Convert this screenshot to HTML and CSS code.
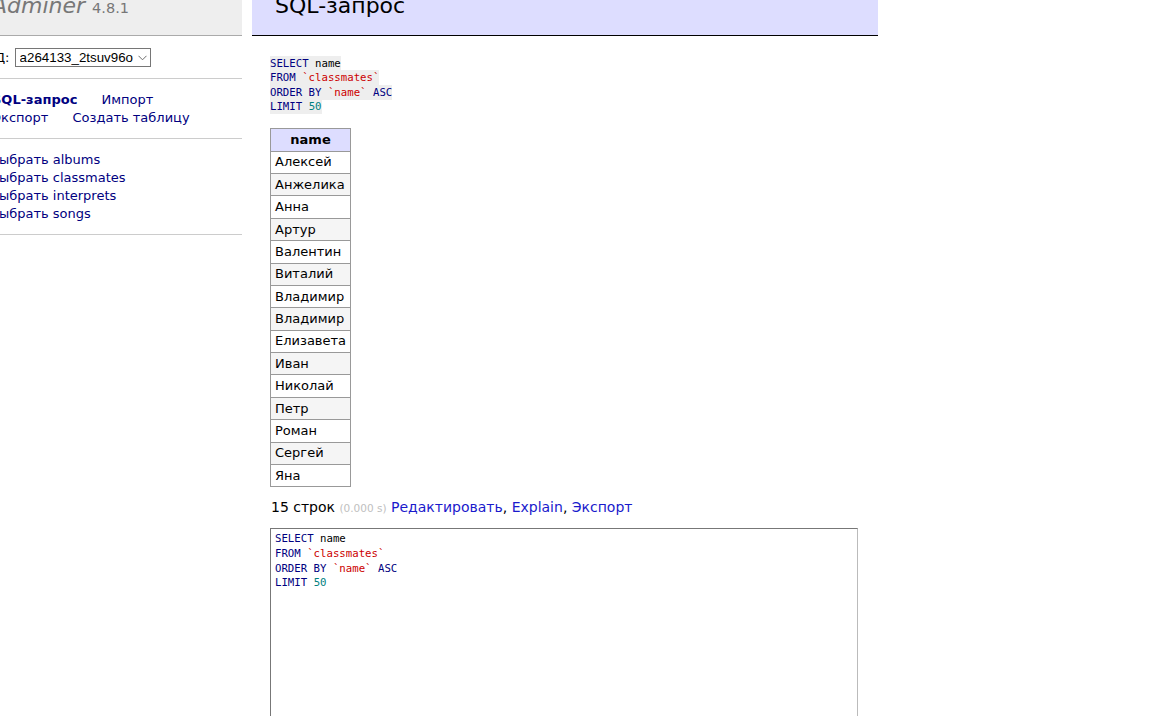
FILE: index.html
```html
<!DOCTYPE html>
<html lang="ru">
<head>
<meta charset="utf-8">
<title>SQL-запрос - Adminer</title>
<link rel="stylesheet" href="styles.css">
</head>
<body>
<div class="page">
  <aside class="menu">
    <h1 class="brand"><span class="brand-inner"><a class="logo" href="#">Adminer</a> <span class="version">4.8.1</span></span></h1>
    <div class="db-row">БД:&nbsp;<span class="select-wrap"><select class="db-select"><option>a264133_2tsuv96o</option></select><svg class="chevron" width="9" height="6" viewBox="0 0 9 6"><path d="M0.5 0.8 L4.5 4.8 L8.5 0.8" fill="none" stroke="#6d6d6d" stroke-width="1"/></svg></span></div>
    <p class="links"><a class="active" href="#">SQL-запрос</a> <a href="#">Импорт</a><br><a href="#">Экспорт</a> <a href="#">Создать таблицу</a></p>
    <ul class="tables">
      <li><a href="#">Выбрать albums</a></li>
      <li><a href="#">Выбрать classmates</a></li>
      <li><a href="#">Выбрать interprets</a></li>
      <li><a href="#">Выбрать songs</a></li>
    </ul>
  </aside>
  <main class="content">
    <h2 class="title"><span class="title-inner">SQL-запрос</span></h2>
    <p class="query"><code class="sql"><span class="kw">SELECT</span> name<br><span class="kw">FROM</span> <span class="bac">`classmates`</span><br><span class="kw">ORDER BY</span> <span class="bac">`name`</span> <span class="kw">ASC</span><br><span class="kw">LIMIT</span> <span class="num">50</span></code></p>
    <table class="result">
      <thead><tr><th>name</th></tr></thead>
      <tbody>
        <tr><td>Алексей</td></tr>
        <tr><td>Анжелика</td></tr>
        <tr><td>Анна</td></tr>
        <tr><td>Артур</td></tr>
        <tr><td>Валентин</td></tr>
        <tr><td>Виталий</td></tr>
        <tr><td>Владимир</td></tr>
        <tr><td>Владимир</td></tr>
        <tr><td>Елизавета</td></tr>
        <tr><td>Иван</td></tr>
        <tr><td>Николай</td></tr>
        <tr><td>Петр</td></tr>
        <tr><td>Роман</td></tr>
        <tr><td>Сергей</td></tr>
        <tr><td>Яна</td></tr>
      </tbody>
    </table>
    <p class="status">15 строк <span class="time">(0.000 s)</span> <a href="#">Редактировать</a>, <a href="#">Explain</a>, <a href="#">Экспорт</a></p>
    <div class="editor"><span class="kw">SELECT</span> name<br><span class="kw">FROM</span> <span class="bac">`classmates`</span><br><span class="kw">ORDER BY</span> <span class="bac">`name`</span> <span class="kw">ASC</span><br><span class="kw">LIMIT</span> <span class="num">50</span></div>
  </main>
</div>
</body>
</html>
```
FILE: styles.css
```css
html, body {
  margin: 0;
  padding: 0;
  overflow: hidden;
  background: #fff;
}
body {
  font-family: "DejaVu Sans", Verdana, sans-serif;
  font-size: 13px;
  color: #000;
}
a {
  text-decoration: none;
  color: #0000ee;
}
.page {
  display: flex;
  align-items: flex-start;
}

/* sidebar */
.menu {
  flex: 0 0 252px;
  width: 252px;
  margin-left: -10px;
}
.brand {
  margin: 0;
  height: 35px;
  overflow: hidden;
  background: #eee;
  border-bottom: 1px solid #aaa;
  font-weight: normal;
  font-size: 22px;
  line-height: 22px;
  color: #777;
  white-space: nowrap;
}
.brand-inner {
  display: block;
  margin-top: -5px;
  margin-left: 2px;
}
.logo {
  color: #777;
  font-style: italic;
}
.version {
  font-size: 14.5px;
  color: #777;
}
.db-row {
  display: flex;
  align-items: center;
  margin-left: -4px;
  padding: 12px 0 11px 0;
  border-bottom: 1px solid #ccc;
  line-height: 18px;
}
.select-wrap {
  position: relative;
  display: block;
  height: 19px;
  margin-left: 1px;
}
.db-select {
  display: block;
  -webkit-appearance: none;
  appearance: none;
  box-sizing: border-box;
  height: 19px;
  width: 136px;
  font-family: "Liberation Sans", Arial, sans-serif;
  font-size: 13.33px;
  line-height: 17px;
  color: #000;
  background: #fff;
  border: 1px solid #767676;
  border-radius: 0;
  padding: 0 0 0 4px;
  margin: 0;
}
.chevron {
  position: absolute;
  right: 4px;
  top: 7px;
}
.links {
  margin: 0;
  padding: 12px 0 11px 2px;
  border-bottom: 1px solid #ccc;
  line-height: 18px;
  white-space: nowrap;
}
.links a {
  color: #000080;
  margin-right: 20px;
}
.links a.active {
  font-weight: bold;
}
.tables {
  list-style: none;
  margin: 0;
  padding: 12px 0 11px;
  border-bottom: 1px solid #ccc;
  line-height: 18px;
}
.tables a {
  color: #000080;
}

/* content */
.content {
  flex: 0 0 588px;
  width: 588px;
  margin-left: 28px;
}
.title {
  margin: 0 -20px 20px -18px;
  height: 35px;
  overflow: hidden;
  background: #ddf;
  border-bottom: 1px solid #000;
  font-weight: normal;
  font-size: 22px;
  line-height: 22px;
  color: #000;
  padding-left: 23px;
  white-space: nowrap;
}
.title-inner {
  display: block;
  margin-top: -5px;
}
.query {
  margin: 0;
  padding-top: 1px;
  font-family: "DejaVu Sans Mono", Consolas, monospace;
  font-size: 10.7px;
  line-height: 14.33px;
}
.sql {
  font-family: "DejaVu Sans Mono", Consolas, monospace;
  font-size: 10.7px;
  background: #eee;
  padding: 1px 0;
  color: #000;
}
.kw {
  color: #000080;
}
.bac {
  color: #cc0000;
}
.num {
  color: #008080;
}
.result {
  margin-top: 14px;
  border-collapse: collapse;
}
.result th,
.result td {
  border: 1px solid #999;
  padding: 2.7px 4px;
  line-height: 16px;
  text-align: left;
}
.result th {
  background: #ddf;
  font-weight: bold;
  text-align: center;
}
.result tbody tr:nth-child(even) td {
  background: #f5f5f5;
}
.status {
  margin: 12px 0 0;
  font-size: 14px;
  line-height: 16px;
  padding-left: 1px;
}
.time {
  color: #c0c0c0;
  font-size: 10.5px;
}
.status a {
  color: #1a1acc;
}
.editor {
  margin-top: 12px;
  box-sizing: border-box;
  width: 588px;
  height: 200px;
  border: 1px solid #777;
  border-right-color: #bbb;
  padding: 3px 4px;
  font-family: "DejaVu Sans Mono", Consolas, monospace;
  font-size: 10.7px;
  line-height: 14.7px;
  color: #000;
}
```
